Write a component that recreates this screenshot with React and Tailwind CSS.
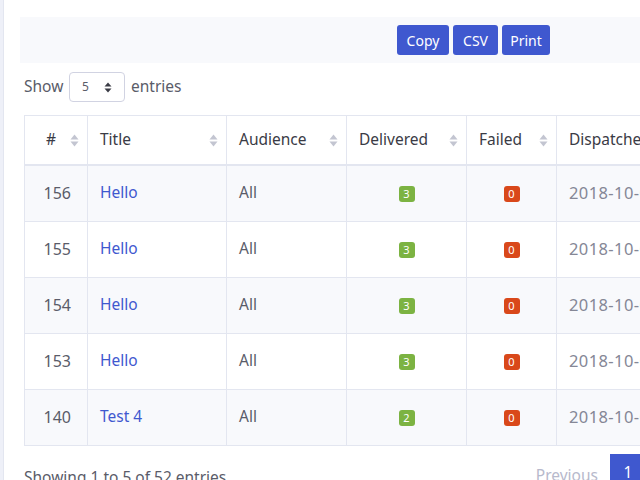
import React from "react";

const font = { fontFamily: '"Noto Sans", "Open Sans", sans-serif' };

function SortIcon() {
  return (
    <svg width="9" height="13" viewBox="0 0 9 13" className="shrink-0">
      <path d="M4.5 0.5 L8.5 5.5 L0.5 5.5 Z" fill="#c3c5d1" />
      <path d="M0.5 7.5 L8.5 7.5 L4.5 12.5 Z" fill="#c3c5d1" />
    </svg>
  );
}

const rows = [
  { id: 156, title: "Hello", d: 3, f: 0 },
  { id: 155, title: "Hello", d: 3, f: 0 },
  { id: 154, title: "Hello", d: 3, f: 0 },
  { id: 153, title: "Hello", d: 3, f: 0 },
  { id: 140, title: "Test 4", d: 2, f: 0 },
];

export default function App() {
  return (
    <div className="w-[640px] h-[480px] overflow-hidden flex bg-white" style={font}>
      <div className="w-[4px] shrink-0 bg-[#eef0f8] border-r border-[#e3e6f0]" />
      <div className="flex-1 pl-[16px] pt-[17px]">
        <div className="h-[46px] w-[700px] bg-[#f8f9fc] pt-[8px] pl-[377px] flex gap-[4px]">
          <button className="h-[30px] w-[52px] rounded-[3px] bg-[#3f58cf] text-white text-[14px]">Copy</button>
          <button className="h-[30px] w-[45px] rounded-[3px] bg-[#3f58cf] text-white text-[14px]">CSV</button>
          <button className="h-[30px] w-[48px] rounded-[3px] bg-[#3f58cf] text-white text-[14px]">Print</button>
        </div>
        <div className="pl-[4px]">
          <div className="mt-[9px] h-[30px] flex items-center text-[15.5px] text-[#5a5c69]">
            <span className="w-[45px] pb-[1px]">Show</span>
            <div className="mr-[6px] h-[30px] w-[56px] border border-[#d1d3e2] rounded-[4px] flex items-center pl-[12px] pr-[12px] justify-between">
              <span className="text-[12px] text-[#5a5c69]">5</span>
              <svg width="8" height="11" viewBox="0 0 8 11">
                <path d="M4 0.5 L7.5 4.5 L0.5 4.5 Z" fill="#3a3b45" />
                <path d="M0.5 6.5 L7.5 6.5 L4 10.5 Z" fill="#3a3b45" />
              </svg>
            </div>
            <span className="pb-[1px]">entries</span>
          </div>
          <div className="mt-[13px] w-[683px] border-l border-t border-[#e3e6f0]">
            <div className="flex h-[50px] border-b-2 border-[#e3e6f0] text-[15.5px] text-[#3a3b45]">
              <div className="w-[63px] border-r border-[#e3e6f0] flex items-center justify-end pr-[8px] gap-[14px]">
                <span>#</span>
                <SortIcon />
              </div>
              <div className="w-[139px] border-r border-[#e3e6f0] flex items-center justify-between pl-[12px] pr-[8px]">
                <span>Title</span>
                <SortIcon />
              </div>
              <div className="w-[120px] border-r border-[#e3e6f0] flex items-center justify-between pl-[12px] pr-[8px]">
                <span>Audience</span>
                <SortIcon />
              </div>
              <div className="w-[120px] border-r border-[#e3e6f0] flex items-center justify-between pl-[12px] pr-[8px]">
                <span>Delivered</span>
                <SortIcon />
              </div>
              <div className="w-[90px] border-r border-[#e3e6f0] flex items-center justify-between pl-[12px] pr-[8px]">
                <span>Failed</span>
                <SortIcon />
              </div>
              <div className="w-[150px] border-r border-[#e3e6f0] flex items-center pl-[12px]">
                <span className="whitespace-nowrap">Dispatched</span>
              </div>
            </div>
            {rows.map((r, i) => (
              <div
                key={r.id}
                className={
                  "flex h-[56px] border-b border-[#e3e6f0] text-[15.5px] text-[#5a5c69] " +
                  (i % 2 === 0 ? "bg-[#f8f9fc]" : "bg-white")
                }
              >
                <div className="w-[63px] border-r border-[#e3e6f0] flex items-center justify-end pr-[16px] pb-[1px] text-[16px]">
                  {r.id}
                </div>
                <div className="w-[139px] border-r border-[#e3e6f0] flex items-center pl-[12px] pb-[1px] text-[#3f58cf]">
                  {r.title}
                </div>
                <div className="w-[120px] border-r border-[#e3e6f0] flex items-center pl-[12px] pb-[1px]">All</div>
                <div className="w-[120px] border-r border-[#e3e6f0] flex items-center justify-center">
                  <span className="w-[16px] h-[16px] rounded-[3px] bg-[#7cb342] text-white text-[11px] flex items-center justify-center leading-none">
                    {r.d}
                  </span>
                </div>
                <div className="w-[90px] border-r border-[#e3e6f0] flex items-center justify-center">
                  <span className="w-[16px] h-[16px] rounded-[3px] bg-[#d9481a] text-white text-[11px] flex items-center justify-center leading-none">
                    {r.f}
                  </span>
                </div>
                <div className="w-[150px] border-r border-[#e3e6f0] flex items-center pl-[12px] pb-[1px] text-[16.5px] tracking-[0.4px] text-[#858796] whitespace-nowrap">
                  2018-10-03
                </div>
              </div>
            ))}
          </div>
          <div className="mt-[8px] w-[622px] flex justify-between items-start">
            <div className="pt-[12px] text-[15.5px] text-[#5a5c69]">Showing 1 to 5 of 52 entries</div>
            <div className="flex items-start">
              <span className="pt-[10px] pr-[12px] text-[15.5px] text-[#b7b9cc]">Previous</span>
              <div className="w-[36px] h-[38px] bg-[#3f58cf] text-white text-[15.5px] flex items-center justify-center">1</div>
            </div>
          </div>
        </div>
      </div>
    </div>
  );
}
